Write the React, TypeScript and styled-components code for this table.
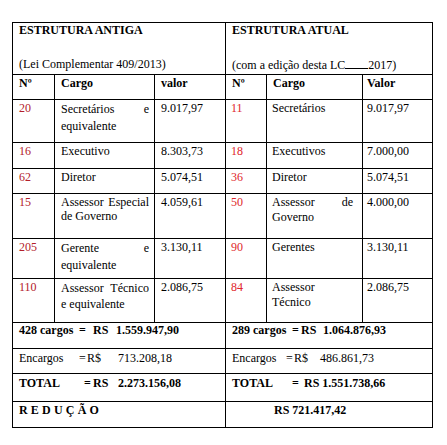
import React from 'react';
import styled, { createGlobalStyle } from 'styled-components';

const Global = createGlobalStyle`
  html, body { margin: 0; padding: 0; background: #fff; }
  body { font-family: "Liberation Serif", "Times New Roman", serif; color: #000; }
`;

const Page = styled.div`
  width: 447px;
  height: 445px;
  padding: 22px 0 0 12px;
  box-sizing: border-box;
`;

const Table = styled.table`
  border-collapse: collapse;
  table-layout: fixed;
  width: 421px;
  font-size: 12px;
  line-height: 15px;
`;

const Row = styled.tr<{ $h: number }>`
  height: ${(p) => p.$h}px;
`;

const Cell = styled.td<{ $pt?: number; $pl?: number; $pr?: number }>`
  border: 1px solid #000;
  padding: ${(p) => p.$pt ?? 1}px ${(p) => p.$pr ?? 5}px 0 ${(p) => p.$pl ?? 6}px;
  vertical-align: top;
  box-sizing: border-box;
`;

const HeadCell = styled(Cell)`
  font-weight: bold;
`;

const NumCell = styled(Cell)<{ $side: 'l' | 'r' }>`
  color: ${(p) => (p.$side === 'l' ? '#b3202a' : '#e0262b')};
`;

const CargoCell = styled(Cell)<{ $lh?: number }>`
  text-align: justify;
  line-height: ${(p) => p.$lh ?? 15}px;
`;

const Title = styled.div`
  font-weight: bold;
  line-height: 14px;
`;

const Subtitle = styled.div`
  margin-top: 20px;
  line-height: 14px;
`;

const Blank = styled.span`
  display: inline-block;
  width: 23px;
  border-bottom: 1px solid #000;
  height: 11px;
  vertical-align: baseline;
`;

const SumLine = styled.div<{ $bold?: boolean }>`
  display: flex;
  white-space: nowrap;
  font-weight: ${(p) => (p.$bold ? 'bold' : 'normal')};
  line-height: 14px;
`;

const Seg = styled.span<{ $w?: number }>`
  flex: 0 0 ${(p) => (p.$w ? `${p.$w}px` : 'auto')};
`;

const Spaced = styled.span`
  letter-spacing: 3.2px;
  font-weight: bold;
`;

type Item = [string, string, string];

const left: Item[] = [
  ['20', 'Secretários e equivalente', '9.017,97'],
  ['16', 'Executivo', '8.303,73'],
  ['62', 'Diretor', '5.074,51'],
  ['15', 'Assessor Especial de Governo', '4.059,61'],
  ['205', 'Gerente e equivalente', '3.130,11'],
  ['110', 'Assessor Técnico e equivalente', '2.086,75'],
];

const right: Item[] = [
  ['11', 'Secretários', '9.017,97'],
  ['18', 'Executivos', '7.000,00'],
  ['36', 'Diretor', '5.074,51'],
  ['50', 'Assessor de Governo', '4.000,00'],
  ['90', 'Gerentes', '3.130,11'],
  ['84', 'Assessor Técnico', '2.086,75'],
];

const rowHeights = [43, 26, 25, 45, 40, 44];
const lineHeights = [17, 15, 15, 14, 17, 16];

type S = [string, number?];

const Summary: React.FC<{ segs: S[]; bold?: boolean }> = ({ segs, bold }) => (
  <SumLine $bold={bold}>
    {segs.map(([t, w], i) => (
      <Seg key={i} $w={w}>
        {t}
      </Seg>
    ))}
  </SumLine>
);

export default function App() {
  return (
    <Page>
      <Global />
      <Table>
        <colgroup>
          <col style={{ width: 42 }} />
          <col style={{ width: 100 }} />
          <col style={{ width: 71 }} />
          <col style={{ width: 41 }} />
          <col style={{ width: 96 }} />
          <col style={{ width: 70 }} />
        </colgroup>
        <tbody>
          <Row $h={52}>
            <Cell colSpan={3} $pt={0}>
              <Title>ESTRUTURA ANTIGA</Title>
              <Subtitle>(Lei Complementar 409/2013)</Subtitle>
            </Cell>
            <Cell colSpan={3} $pt={0}>
              <Title>ESTRUTURA ATUAL</Title>
              <Subtitle>
                (com a edição desta LC<Blank />2017)
              </Subtitle>
            </Cell>
          </Row>
          <Row $h={25}>
            <HeadCell>Nº</HeadCell>
            <HeadCell>Cargo</HeadCell>
            <HeadCell>valor</HeadCell>
            <HeadCell>Nº</HeadCell>
            <HeadCell>Cargo</HeadCell>
            <HeadCell $pl={4}>Valor</HeadCell>
          </Row>
          {left.map((l, i) => {
            const r = right[i];
            return (
              <Row key={i} $h={rowHeights[i]}>
                <NumCell $side="l">{l[0]}</NumCell>
                <CargoCell $lh={lineHeights[i]}>{l[1]}</CargoCell>
                <Cell>{l[2]}</Cell>
                <NumCell $side="r" $pl={5}>{r[0]}</NumCell>
                <CargoCell $pl={5} $pr={9}>{r[1]}</CargoCell>
                <Cell $pl={4}>{r[2]}</Cell>
              </Row>
            );
          })}
          <Row $h={26}>
            <Cell colSpan={3} $pt={0}>
              <Summary bold segs={[['428 cargos', 60], ['=', 14], ['RS', 23], ['1.559.947,90']]} />
            </Cell>
            <Cell colSpan={3} $pt={0}>
              <Summary bold segs={[['289 cargos', 60], ['=', 9], ['RS', 22], ['1.064.876,93']]} />
            </Cell>
          </Row>
          <Row $h={25}>
            <Cell colSpan={3} $pt={2}>
              <Summary segs={[['Encargos', 60], ['=', 8], ['R$', 31], ['713.208,18']]} />
            </Cell>
            <Cell colSpan={3} $pt={2}>
              <Summary segs={[['Encargos', 54], ['=', 8], ['R$', 26], ['486.861,73']]} />
            </Cell>
          </Row>
          <Row $h={28}>
            <Cell colSpan={3} $pt={2}>
              <Summary bold segs={[['TOTAL', 65], ['=', 9], ['RS', 25], ['2.273.156,08']]} />
            </Cell>
            <Cell colSpan={3} $pt={2}>
              <Summary bold segs={[['TOTAL', 60], ['=', 12], ['RS 1.551.738,66']]} />
            </Cell>
          </Row>
          <Row $h={26}>
            <Cell colSpan={3} $pt={1}>
              <Spaced>REDUÇÃO</Spaced>
            </Cell>
            <Cell colSpan={3} $pt={1} $pl={48}>
              <Summary bold segs={[['RS 721.417,42']]} />
            </Cell>
          </Row>
        </tbody>
      </Table>
    </Page>
  );
}
